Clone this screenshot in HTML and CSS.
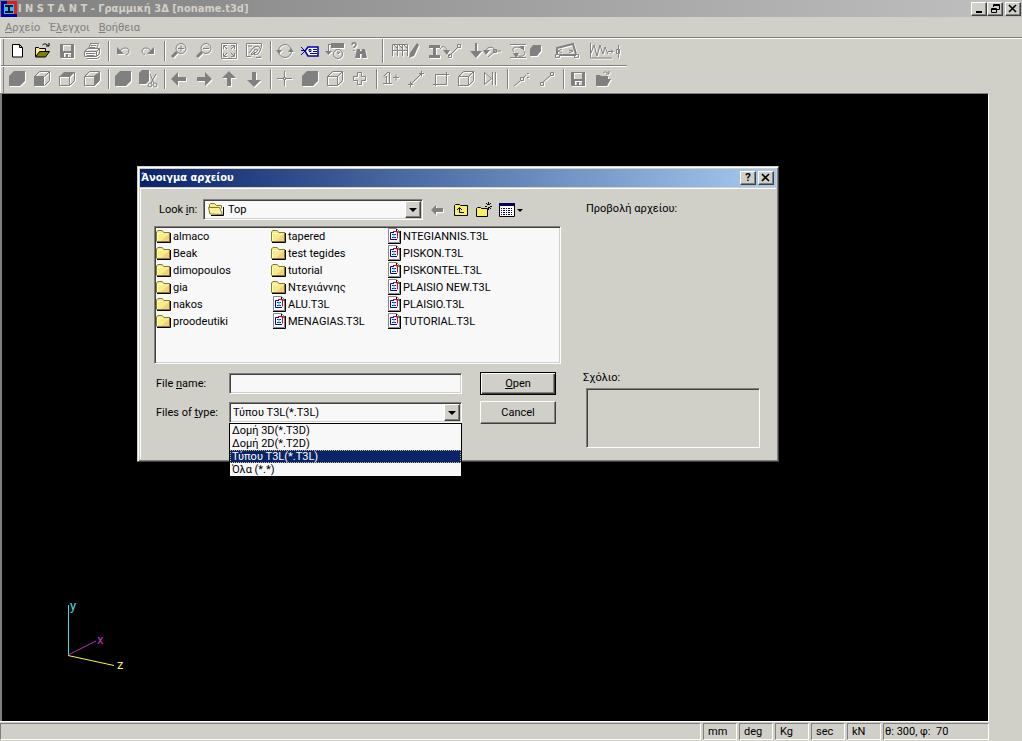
FILE: index.html
```html
<!DOCTYPE html>
<html lang="el">
<head>
<meta charset="utf-8">
<title>INSTANT - Γραμμική 3Δ [noname.t3d]</title>
<link rel="stylesheet" href="styles.css">
</head>
<body>
<svg class="sprite" aria-hidden="true">
  <symbol id="solid" viewBox="0 0 20 20"><path fill="currentColor" d="M2 7l5-5h11v10l-5 5H2z"/></symbol>
  <symbol id="cube-front" viewBox="0 0 20 20"><path fill="currentColor" d="M2 7h10v10H2z"/><path class="ln" d="M2.500 7.500l5-5h10v9l-5 5M12.500 7.500l5-5"/></symbol>
  <symbol id="cube-top" viewBox="0 0 20 20"><path fill="currentColor" d="M2 8l5-5h11l-5 5z"/><path class="ln" d="M2.500 7.500h10v9h-10zM12.500 16.500l5-5v-8"/></symbol>
  <symbol id="cube-side" viewBox="0 0 20 20"><path fill="currentColor" d="M12 7l5-4v9l-5 5z"/><path class="ln" d="M2.500 7.500h10v9h-10zM2.500 7.500l5-5h10v9l-5 5"/></symbol>
  <symbol id="cube" viewBox="0 0 20 20"><path class="ln" d="M2.500 7.500h10v9h-10zM2.500 7.500l5-5h10v9l-5 5M12.500 7.500l5-5"/></symbol>
  <symbol id="floppy" viewBox="0 0 20 20"><path fill="currentColor" fill-rule="evenodd" d="M3 3h14v14H4l-1-1zM6 4v6h8V4zM7 12v4h2v-3h2v3h3v-4z"/></symbol>
  <symbol id="arrow" viewBox="0 0 20 20"><path fill="currentColor" d="M2 10l7-7v5h8v4H9v5z"/></symbol>
  <symbol id="undo" viewBox="0 0 20 20"><path class="ln" d="M7 10c2-4 9-4 9 0 0 2-1 3-3 4"/><path fill="currentColor" d="M4 6v7h7z"/></symbol>
  <symbol id="lens" viewBox="0 0 20 20"><circle class="ln" cx="12" cy="7.500" r="5"/><path stroke="currentColor" stroke-width="3" d="M8 11l-5 5"/></symbol>
  <symbol id="open" viewBox="0 0 20 20"><path fill="currentColor" d="M3 6h4l1 1h7v3h3l-4 7H3z"/><path class="ln" d="M10 4c2-2 4-1 6 1m0-3v3h-3"/></symbol>
  <symbol id="folder" viewBox="0 0 17 16"><path fill="#847c28" d="M0 4l2-2h4l2 2h6v10H1l-1-1z"/><path fill="#f8ec88" d="M1 4l1-1h4l2 2h5v8H1z"/><path fill="#ffffc8" d="M1 5h6l1 1H2v7H1z"/><path fill="#f0d080" d="M5 13l8-7v7z"/><path stroke="#000" fill="none" d="M1 14.500h13.500V5"/></symbol>
  <symbol id="doc" viewBox="0 0 17 16"><path fill="#fff" stroke="#888" d="M2.500 .5h8l3 3v11h-11z"/><path stroke="#000" fill="none" d="M2 15.500h12.500V3M10.500 1v3h4"/><path fill="none" stroke="#0000c0" d="M8 4.500H4.500v7H11"/><path fill="none" stroke="#e00018" d="M7 3.500h4.500v7"/><path stroke="#0020c0" d="M6 6.500h4m-4 3h4"/><path stroke="#18c8d8" d="M8 6v4"/></symbol>
</svg>

<header class="titlebar">
  <svg class="app-icon" viewBox="0 0 16 16"><path fill="#0000a0" d="M0 0h16v16H0z"/><path fill="#d82020" d="M6 0h10v13h-3V3H6z"/><path fill="#38b8e8" d="M3 3h10v10H3z"/><path fill="#001020" d="M4 4h8v2H9v4h3v2H4v-2h3V6H4z"/></svg>
  <h1>I N S T A N T - Γραμμική 3Δ [noname.t3d]</h1>
  <div class="win-buttons">
    <button aria-label="Minimize"><svg viewBox="0 0 12 10"><path fill="#000" d="M3 7h6v2H3z"/></svg></button>
    <button aria-label="Restore"><svg viewBox="0 0 12 10"><path fill="none" stroke="#000" d="M4.500 3V.5h6v5H8M4 1.500h7M2.500 4.500h5v4h-5zM2 5.500h6"/></svg></button>
    <button class="close" aria-label="Close"><svg viewBox="0 0 12 10"><path stroke="#000" stroke-width="1.600" d="M2 1l7 7m0-7L2 8"/></svg></button>
  </div>
</header>
<nav class="menu"><button><u>Α</u>ρχείο</button><button>Έ<u>λ</u>εγχοι</button><button><u>Β</u>οήθεια</button></nav>

<div class="bars">
  <div class="toolbar">
    <div class="group">
      <button class="on" aria-label="New"><svg viewBox="0 0 20 20"><path fill="#fff" stroke="#000" d="M5.500 3.500h7l3 3v9.500h-10zM12.500 3.500v3h3"/></svg></button>
      <button class="on" aria-label="Open"><svg viewBox="0 0 20 20"><path fill="#f8f080" stroke="#000" d="M3.500 15.500v-9h3l1 1h6v3"/><path fill="#808000" stroke="#000" d="M3.500 16l4-5.500h10l-4 5.500z"/><path fill="none" stroke="#000" d="M10.500 4c2-2 4-1 6 1m.500-3v3h-3"/></svg></button>
      <button aria-label="Save"><svg viewBox="0 0 20 20"><use href="#floppy"/></svg></button>
      <button aria-label="Print"><svg viewBox="0 0 20 20"><path class="ln" d="M6.500 8l2-5.500h8L14.500 8M9 4.500h5M8 6.500h5M2.500 10.500l3-3h12l-3 3zM2.500 10.500v5h12v-5M14.500 15.500l3-3v-5M4 12.500h9M4.500 17.500h11l2-2M5 14.500h7"/></svg></button>
    </div>
    <div class="group">
      <button aria-label="Undo"><svg viewBox="0 0 20 20"><use href="#undo"/></svg></button>
      <button aria-label="Redo"><svg class="flip" viewBox="0 0 20 20"><use href="#undo"/></svg></button>
    </div>
    <div class="group">
      <button aria-label="Zoom in"><svg viewBox="0 0 20 20"><use href="#lens"/><path class="ln" d="M9 7.500h6m-3-3v6"/></svg></button>
      <button aria-label="Zoom out"><svg viewBox="0 0 20 20"><use href="#lens"/><path class="ln" d="M9 7.500h6"/></svg></button>
      <button aria-label="Zoom extents"><svg viewBox="0 0 20 20"><path class="ln" d="M2.500 2.500h15v15h-15zM5 5l3 3m7-3l-3 3m3 7l-3-3m-7 3l3-3M4.500 8V4.500H8M12 4.500h3.500V8M15.500 12v3.500H12M8 15.500H4.500V12"/></svg></button>
      <button aria-label="Pan"><svg viewBox="0 0 20 20"><path class="ln" d="M7 15.500H2.500v-13h15v4M4 5h4M5 12l5-6 4-1 3 3-3 5-4 1 1-3-3 3-1-1 4-4M10 8l4 1-3 3M12 16.500h5l-2-2"/></svg></button>
    </div>
    <div class="group">
      <button aria-label="Rotate"><svg viewBox="0 0 20 20"><circle class="ln" cx="10" cy="10" r="6.500"/><path fill="currentColor" d="M1 9h6l-3 4zM13 11h6l-3-4z"/></svg></button>
      <button class="on" aria-label="Properties"><svg viewBox="0 0 20 20"><path fill="#fff" stroke="#0000a8" stroke-width="1.500" d="M5 10l3-4h10v9H8z"/><path stroke="#0000a8" fill="none" d="M9 8.500h2v2H9zM13 8.500h4m-4 2h4m-7 2h7M1 6l3 3m-3 5l4-4M1 9.500h5"/></svg></button>
      <button aria-label="Sort by time"><svg viewBox="0 0 20 20"><path fill="currentColor" d="M6 2h13v5H6zM0 10h7l-3.500 4z"/><path class="ln" d="M3.500 3v9M3 3.500h3"/><circle class="ln" cx="13" cy="13" r="4.500"/><path class="ln" d="M13 10v3l2-2"/></svg></button>
      <button aria-label="Find"><svg viewBox="0 0 20 20"><path class="ln" stroke-width="1.500" d="M2 4c0-3 4-3 4 0 0 2-2 1-2 3m0 2v1"/><path fill="currentColor" d="M7 8h3v2h2V8h3l2 9h-5v-4h-2v4H5z"/></svg></button>
    </div>
    <div class="group wide">
      <button aria-label="Edit grid"><svg viewBox="0 0 34 20"><path class="ln" d="M4.500 15V3.500h15V15M4 9.500h15M9.500 4v11m5-11v11M6 4l3 3m2-3l3 3m2-3l3 3"/><path fill="currentColor" d="M29 2l2 2-5 11-5 2 1-5z"/></svg></button>
      <button aria-label="Sections"><svg viewBox="0 0 34 20"><path fill="currentColor" d="M1 4h11v3H8v7h4v3H1v-3h4V7H1zM15 9h7l-3 5z"/><path class="ln" d="M12 8c2-4 6-3 7 2M21 15l9-9M20.500 13.500h3v3h-3zM29.500 3.500h3v3h-3z"/></svg></button>
      <button aria-label="Loads"><svg viewBox="0 0 34 20"><path fill="currentColor" d="M7 2h2v8h5l-6 7-6-7h5zM15 9h7l-4 5z"/><path class="ln" d="M18 10c0-5 9-5 9 0M20 16l7-6h6M25.500 8.500h3v3h-3z"/></svg></button>
      <button aria-label="Solve"><svg viewBox="0 0 34 20"><path class="ln" d="M2 3.500h16M6 11c-4-4 3-7 8-3M2 16.500h16M16 10c3 4-3 7-8 4"/><path fill="currentColor" d="M11 5h5v5zM5 12h6l-3 5zM22 8l3-4h8v6l-4 5h-7z"/></svg></button>
      <button aria-label="Deformation"><svg viewBox="0 0 34 20"><path class="ln" stroke-width="2" d="M9 13V7l16-4 3 10M12 14h16"/><path class="ln" d="M7.500 13.500h4v3h-4zM26.500 13.500h4v3h-4zM14 8l-4 2 4 2M21 9l4 1-4 2"/></svg></button>
      <button aria-label="Spectrum"><svg viewBox="0 0 34 20"><path class="ln" d="M2.500 2v15H24M3 12l3-8 3 11 3-11 3 9 2-7 3 7M20 10.500h5m-2-2l2 2-2 2M30.500 4v13M28.500 8.500h3v4h-3z"/></svg></button>
    </div>
  </div>
  <div class="toolbar">
    <div class="group">
      <button aria-label="Solid"><svg viewBox="0 0 20 20"><use href="#solid"/></svg></button>
      <button aria-label="Front view"><svg viewBox="0 0 20 20"><use href="#cube-front"/></svg></button>
      <button aria-label="Top view"><svg viewBox="0 0 20 20"><use href="#cube-top"/></svg></button>
      <button aria-label="Side view"><svg viewBox="0 0 20 20"><use href="#cube-side"/></svg></button>
    </div>
    <div class="group">
      <button aria-label="Section box"><svg viewBox="0 0 20 20"><use href="#solid"/></svg></button>
      <button aria-label="Cut"><svg viewBox="0 0 20 20"><path fill="currentColor" d="M1 4l3-3h7v11l-3 3H1z"/><path class="ln" d="M12 5l4 9m2-9l-5 9"/><circle class="ln" cx="12" cy="16" r="2"/><circle class="ln" cx="17" cy="16" r="2"/></svg></button>
    </div>
    <div class="group">
      <button aria-label="Left"><svg viewBox="0 0 20 20"><use href="#arrow"/></svg></button>
      <button aria-label="Right"><svg class="flip" viewBox="0 0 20 20"><use href="#arrow"/></svg></button>
      <button aria-label="Up"><svg viewBox="0 0 20 20"><path fill="currentColor" d="M10 2l7 7h-5v8H8V9H3z"/></svg></button>
      <button aria-label="Down"><svg viewBox="0 0 20 20"><path fill="currentColor" d="M10 18l7-7h-5V3H8v8H3z"/></svg></button>
    </div>
    <div class="group">
      <button aria-label="Node"><svg viewBox="0 0 20 20"><path class="ln" d="M2 9.500h6m3 0h6M9.500 2v6m0 3v6M8.500 8.500h2v2h-2z"/></svg></button>
      <button aria-label="Volume"><svg viewBox="0 0 20 20"><use href="#solid"/></svg></button>
      <button aria-label="Wire box"><svg viewBox="0 0 20 20"><use href="#cube"/></svg></button>
      <button aria-label="Add"><svg viewBox="0 0 20 20"><path class="ln" d="M7.500 3.500h4v4h4v4h-4v4h-4v-4h-4v-4h4z"/></svg></button>
    </div>
    <div class="group">
      <button aria-label="Add one"><svg viewBox="0 0 20 20"><path class="ln" d="M2.500 7.500l4-4h2v11M5.500 14V7l-2 2M2 14.500h9M12 8.500h6m-3-3v6"/></svg></button>
      <button aria-label="Add line"><svg viewBox="0 0 20 20"><path class="ln" d="M2 15.500h5m-2.500-3v6M5 15L15 5M13 4.500h5M15.500 2v5"/></svg></button>
      <button aria-label="Add area"><svg viewBox="0 0 20 20"><path class="ln" d="M4.500 17V5.500H15M5 15.500h10.500V3M2 15.500h3M15 5.500h3"/></svg></button>
      <button aria-label="Add box"><svg viewBox="0 0 20 20"><use href="#cube"/></svg></button>
      <button aria-label="Mirror"><svg viewBox="0 0 20 20"><path class="ln" d="M3.500 3.500v12l7-6zM11.500 3v13M14.500 3v13"/></svg></button>
    </div>
    <div class="group">
      <button aria-label="Midpoint"><svg viewBox="0 0 20 20"><path class="ln" d="M2 17l6-5m3-3l3-3M8.500 8.500h3v3h-3zM15 4.500h2M15 8.500h2"/></svg></button>
      <button aria-label="Segment"><svg viewBox="0 0 20 20"><path class="ln" d="M3.500 13.500h3v3h-3zM13.500 3.500h3v3h-3zM6 13l8-7"/></svg></button>
    </div>
    <div class="group">
      <button aria-label="Save view"><svg viewBox="0 0 20 20"><use href="#floppy"/></svg></button>
      <button aria-label="Load view"><svg viewBox="0 0 20 20"><use href="#open"/></svg></button>
    </div>
  </div>
</div>

<main class="canvas">
  <svg class="axes" viewBox="0 0 80 80">
    <path stroke="#40e0e0" d="M8.500 8v50"/><path stroke="#c030c0" d="M8 58l28-14"/><path stroke="#f8f840" d="M8 58.500l46 10"/>
    <text x="10" y="13" fill="#40e0e0">y</text><text x="37" y="47" fill="#c030c0">x</text><text x="57" y="72" fill="#f8f840">z</text>
  </svg>

  <section class="dialog" role="dialog" aria-labelledby="dlg-title">
    <div class="dialog-title">
      <h2 id="dlg-title">Άνοιγμα αρχείου</h2>
      <div class="win-buttons">
        <button aria-label="Help"><b>?</b></button>
        <button class="close" aria-label="Close"><svg viewBox="0 0 12 10"><path stroke="#000" stroke-width="1.600" d="M2 1l7 7m0-7L2 8"/></svg></button>
      </div>
    </div>
    <div class="dialog-body">
      <div class="left">
        <div class="lookin">
          <label for="lookin">Look <u>i</u>n:</label>
          <div class="combo">
            <svg class="combo-icon" viewBox="0 0 17 16"><path fill="#f8ec88" stroke="#847c28" d="M1.500 12.500v-9l1-1h4l2 2h5v3"/><path fill="#fff0a0" stroke="#847c28" d="M2 13L.5 6.500h11l3 7z"/><path fill="none" stroke="#000" d="M3 14.500h12.500V6"/></svg>
            <select id="lookin" class="with-icon"><option>Top</option></select><span class="arrow"></span>
          </div>
          <div class="tools">
            <button class="back" aria-label="Back"><svg viewBox="0 0 16 16"><path fill="#808080" d="M1 8l5-5v3h7v4H6v3z"/></svg></button>
            <button aria-label="Up one level"><svg viewBox="0 0 16 16"><path fill="#f8f060" stroke="#000" d="M1.500 13.500v-10l1-1h4l1 1h7v10z"/><path fill="none" stroke="#000" d="M6.500 6v4.500H11M4 8l2.500-2.500L9 8"/></svg></button>
            <button aria-label="New folder"><svg viewBox="0 0 16 16"><path fill="#f8f060" stroke="#000" d="M.5 14.500v-8l1-1h3l1 1h6v8z"/><path stroke="#000" d="M12.500 0v3m0 2v3M9 4.500h2m3 0h2M10 1l2 2m3-2l-2 2m0 2l2 2"/></svg></button>
            <button class="views" aria-label="View"><svg viewBox="0 0 24 16"><path fill="#fff" stroke="#000" d="M.5 1.500h15v13H.5z"/><path fill="#000060" d="M0 1h16v3H0z"/><path stroke="#000080" stroke-dasharray="1 1 2 1" d="M2 6.500h12M2 8.500h12M2 10.500h12M2 12.500h12"/><path fill="#000" d="M18 7h6l-3 3z"/></svg></button>
          </div>
        </div>
        <ul class="files">
          <li><svg viewBox="0 0 17 16"><use href="#folder"/></svg>almaco</li>
          <li><svg viewBox="0 0 17 16"><use href="#folder"/></svg>Beak</li>
          <li><svg viewBox="0 0 17 16"><use href="#folder"/></svg>dimopoulos</li>
          <li><svg viewBox="0 0 17 16"><use href="#folder"/></svg>gia</li>
          <li><svg viewBox="0 0 17 16"><use href="#folder"/></svg>nakos</li>
          <li><svg viewBox="0 0 17 16"><use href="#folder"/></svg>proodeutiki</li>
          <li><svg viewBox="0 0 17 16"><use href="#folder"/></svg>tapered</li>
          <li><svg viewBox="0 0 17 16"><use href="#folder"/></svg>test tegides</li>
          <li><svg viewBox="0 0 17 16"><use href="#folder"/></svg>tutorial</li>
          <li><svg viewBox="0 0 17 16"><use href="#folder"/></svg>Ντεγιάννης</li>
          <li><svg viewBox="0 0 17 16"><use href="#doc"/></svg>ALU.T3L</li>
          <li><svg viewBox="0 0 17 16"><use href="#doc"/></svg>MENAGIAS.T3L</li>
          <li><svg viewBox="0 0 17 16"><use href="#doc"/></svg>NTEGIANNIS.T3L</li>
          <li><svg viewBox="0 0 17 16"><use href="#doc"/></svg>PISKON.T3L</li>
          <li><svg viewBox="0 0 17 16"><use href="#doc"/></svg>PISKONTEL.T3L</li>
          <li><svg viewBox="0 0 17 16"><use href="#doc"/></svg>PLAISIO NEW.T3L</li>
          <li><svg viewBox="0 0 17 16"><use href="#doc"/></svg>PLAISIO.T3L</li>
          <li><svg viewBox="0 0 17 16"><use href="#doc"/></svg>TUTORIAL.T3L</li>
        </ul>
        <div class="fields">
          <label for="fname">File <u>n</u>ame:</label>
          <input id="fname" type="text">
          <button class="push default"><span><u>O</u>pen</span></button>
          <label for="ftype">Files of <u>t</u>ype:</label>
          <div class="combo">
            <select id="ftype"><option>Τύπου T3L(*.T3L)</option></select><span class="arrow"></span>
            <ul class="droplist" role="listbox" aria-label="Files of type">
              <li role="option">Δομή 3D(*.T3D)</li>
              <li role="option">Δομή 2D(*.T2D)</li>
              <li role="option" class="selected" aria-selected="true">Τύπου T3L(*.T3L)</li>
              <li role="option">Όλα (*.*)</li>
            </ul>
          </div>
          <button class="push">Cancel</button>
        </div>
      </div>
      <div class="right">
        <p class="preview">Προβολή αρχείου:</p>
        <label for="comment">Σχόλιο:</label>
        <textarea id="comment" readonly></textarea>
      </div>
    </div>
  </section>
</main>

<footer class="status">
  <span class="grow"></span><span>mm</span><span>deg</span><span>Kg</span><span>sec</span><span>kN</span><span class="angle">θ: 300, φ:&nbsp; 70</span>
</footer>
</body>
</html>
```
FILE: styles.css
```css
:root {
  --face: #d0cfc8;
  --shadow: #808080;
  --dark: #404040;
  --light: #f8f8f8;
}
*, ::before { box-sizing: border-box; }
body {
  margin: 0;
  height: 100vh;
  overflow: hidden;
  display: flex;
  flex-direction: column;
  background: var(--face);
  color: #000;
  font: 11px/14px Roboto, "Liberation Sans", sans-serif;
}
button, input, select, textarea { font: inherit; color: inherit; border-radius: 0; margin: 0; }
button { padding: 0; border: 0; background: none; }
h1, h2, p, ul { margin: 0; padding: 0; font-size: inherit; }
ul { list-style: none; }
svg { display: block; flex: none; }
.sprite { position: absolute; width: 0; height: 0; }
.ln { fill: none; stroke: currentColor; }

.titlebar {
  flex: none;
  display: flex;
  align-items: center;
  height: 17px;
  padding: 0 1px;
  background: linear-gradient(90deg, #808080, #c0c0c0);
  color: #d4d0c8;
}
.app-icon { width: 16px; height: 16px; }
h1, h2 { font: bold 11px/14px "DejaVu Sans Condensed", "DejaVu Sans", sans-serif; white-space: nowrap; }
h1 { flex: 1; padding-left: 1px; }
.win-buttons { display: flex; }
.win-buttons button {
  width: 16px;
  height: 14px;
  padding: 1px;
  background: var(--face);
  border: 1px solid;
  border-color: #fff var(--dark) var(--dark) #fff;
  box-shadow: inset -1px -1px var(--shadow);
  color: #000;
  line-height: 10px;
}
.win-buttons svg { width: 12px; height: 10px; }
.win-buttons .close { margin-left: 2px; }

.menu {
  flex: none;
  display: flex;
  gap: 9px;
  height: 20px;
  padding: 1px 5px 0;
  color: var(--shadow);
}
.bars { flex: none; border-top: 1px solid var(--shadow); box-shadow: inset 0 1px #fff; padding-top: 1px; }
.toolbar {
  display: flex;
  width: 627px;
  height: 28px;
  padding: 0 0 4px 4px;
  border-left: 1px solid #fff;
  box-shadow: inset 0 -1px #fff, inset 0 -2px var(--shadow), inset 2px 0 var(--face), inset 3px 0 var(--shadow);
}
.toolbar:last-child {
  height: 26px;
  padding-bottom: 2px;
  box-shadow: inset 2px 0 var(--face), inset 3px 0 var(--shadow);
}
.group { display: flex; align-items: center; }
.group + .group::before {
  content: "";
  width: 2px;
  height: 20px;
  margin: 0 1px 0 3px;
  border-left: 1px solid var(--shadow);
  border-right: 1px solid #fff;
}
.group button { width: 25px; height: 24px; padding: 2px; color: var(--shadow); }
.group svg { width: 20px; height: 20px; filter: drop-shadow(1px 1px 0 #fff); }
.group .on svg { filter: none; }
.flip { transform: scaleX(-1); }
.group .flip { filter: drop-shadow(-1px 1px 0 #fff); }
.group.wide::before { margin: 0 1px 0 9px; height: 24px; }
.group.wide button { width: 40px; padding: 2px 3px; }
.group.wide svg { width: 34px; }

.canvas {
  flex: 1;
  position: relative;
  margin-right: 33px;
  background: #000;
  border-left: 2px solid var(--shadow);
  border-top: 1px solid var(--shadow);
  border-right: 1px solid #fff;
}
.axes { position: absolute; left: 58px; bottom: 44px; width: 80px; height: 80px; font-size: 13px; }

.dialog {
  position: absolute;
  left: 135px;
  top: 72px;
  width: 642px;
  padding: 1px;
  background: var(--face);
  border: 1px solid;
  border-color: var(--face) var(--dark) var(--dark) var(--face);
  box-shadow: inset 1px 1px #fff, inset -1px -1px var(--shadow);
}
.dialog-title {
  display: flex;
  align-items: center;
  justify-content: space-between;
  height: 18px;
  margin: 1px;
  padding: 0 2px 0 1px;
  color: #fff;
  background: linear-gradient(90deg, #0a246a, #a6caf0);
}
.dialog-body {
  display: grid;
  grid-template-columns: 407px 1fr;
  gap: 22px;
  margin: 1px;
  padding: 10px 16px 11px 13px;
  border-left: 1px solid #fff;
  border-top: 1px solid #fff;
}
.lookin { display: flex; align-items: center; height: 21px; margin-bottom: 6px; padding-left: 5px; }
.lookin label { width: 44px; }
.lookin .combo { width: 220px; }
.combo { position: relative; }
select, input, textarea {
  display: block;
  width: 100%;
  height: 21px;
  appearance: none;
  background: var(--light);
  border: 1px solid;
  border-color: var(--shadow) #fff #fff var(--shadow);
  box-shadow: inset 1px 1px var(--dark), inset -1px -1px var(--face);
  padding: 0 20px 0 3px;
  outline: 0;
}
select.with-icon { padding-left: 24px; }
.combo-icon { position: absolute; left: 5px; top: 2px; width: 17px; height: 16px; }
.arrow {
  position: absolute;
  right: 2px;
  top: 2px;
  width: 16px;
  height: 17px;
  display: grid;
  place-items: center;
  background: var(--face);
  border: 1px solid;
  border-color: #fff var(--dark) var(--dark) #fff;
  box-shadow: inset -1px -1px var(--shadow);
  pointer-events: none;
}
.arrow::before { content: ""; border: 4px solid transparent; border-top-color: #000; border-bottom: 0; }
.tools { display: flex; gap: 7px; padding-left: 7px; }
.tools svg { width: 16px; height: 16px; }
.tools .views svg { width: 24px; }
.back { filter: drop-shadow(1px 1px 0 #fff); }
.files {
  display: grid;
  grid-auto-flow: column;
  grid-template-rows: repeat(6, 17px);
  grid-template-columns: repeat(3, 115px);
  height: 138px;
  padding: 1px;
  background: var(--light);
  border: 1px solid;
  border-color: var(--shadow) #fff #fff var(--shadow);
  box-shadow: inset 1px 1px var(--dark), inset -1px -1px var(--face);
}
.files li { display: flex; line-height: 18px; white-space: nowrap; }
.files svg { width: 17px; height: 16px; }
.fields {
  display: grid;
  grid-template-columns: 73px 233px 1fr;
  row-gap: 6px;
  align-items: center;
  margin-top: 8px;
  padding: 0 5px 0 2px;
}
.push {
  justify-self: end;
  width: 76px;
  height: 23px;
  border: 1px solid;
  border-color: #fff var(--dark) var(--dark) #fff;
  box-shadow: inset -1px -1px var(--shadow);
}
.push.default {
  border-color: #000;
  box-shadow: inset 1px 1px #fff, inset -1px -1px var(--dark), inset -2px -2px var(--shadow);
}
.droplist {
  position: absolute;
  left: 0;
  right: 0;
  top: 100%;
  background: var(--light);
  border: 1px solid #000;
  border-bottom: 0;
}
.droplist li { height: 13px; line-height: 13px; padding-left: 2px; }
.droplist .selected { background: #0a246a; color: #fff; outline: 1px dotted #c8b870; outline-offset: -1px; }
.right { display: flex; flex-direction: column; }
.preview { height: 169px; padding: 3px; }
.right label { line-height: 20px; }
.right textarea { width: auto; height: 60px; margin-left: 3px; background: var(--face); resize: none; }

.status {
  flex: none;
  display: flex;
  gap: 2px;
  height: 20px;
  margin-right: 33px;
  padding: 1px 0;
  border-top: 1px solid #fff;
}
.status span {
  width: 34px;
  padding-left: 4px;
  line-height: 16px;
  border: 1px solid;
  border-color: var(--shadow) #fff #fff var(--shadow);
  white-space: nowrap;
}
.status .grow { flex: 1; }
.status .angle { width: 106px; padding-left: 1px; }
```
